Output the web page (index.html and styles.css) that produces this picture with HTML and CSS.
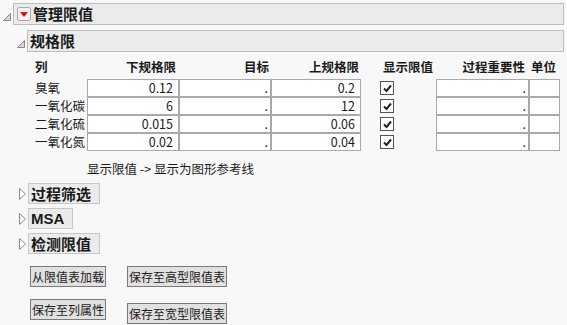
FILE: index.html
```html
<!DOCTYPE html>
<html lang="zh-CN">
<head>
<meta charset="UTF-8">
<title>管理限值</title>
<link rel="stylesheet" href="styles.css">
</head>
<body>
<div class="outline top">
    <div class="ohead">
        <svg class="tri" width="8" height="8" viewBox="0 0 8 8"><polygon points="0.5,7.5 7.5,0.5 7.5,7.5" fill="#d6d6d6" stroke="#8a8a8a" stroke-width="1"/></svg>
        <div class="bar main">
            <span class="menu"><svg width="8" height="5" viewBox="0 0 8 5"><polygon points="0,0 8,0 4,5" fill="#e0101a"/></svg></span>
            管理限值
        </div>
    </div>

    <div class="outline sub">
        <div class="ohead">
            <svg class="tri" width="8" height="8" viewBox="0 0 8 8"><polygon points="0.5,7.5 7.5,0.5 7.5,7.5" fill="#d6d6d6" stroke="#8a8a8a" stroke-width="1"/></svg>
            <div class="bar">规格限</div>
        </div>
        <div class="obody">
            <table class="limits">
                <tr class="hdr">
                    <th class="name">列</th>
                    <th class="num c-lsl">下规格限</th>
                    <th class="num c-tgt">目标</th>
                    <th class="num c-usl">上规格限</th>
                    <th class="show">显示限值</th>
                    <th class="num c-imp">过程重要性</th>
                    <th class="unit">单位</th>
                </tr>
                <tr>
                    <td class="name">臭氧</td>
                    <td class="cell num">0.12</td>
                    <td class="cell num">.</td>
                    <td class="cell num">0.2</td>
                    <td class="show"><span class="check"><svg width="11" height="11" viewBox="0 0 11 11"><path d="M2 5.5 L4.5 8 L9 2.5" fill="none" stroke="#222" stroke-width="2"/></svg></span></td>
                    <td class="cell num">.</td>
                    <td class="cell"></td>
                </tr>
                <tr>
                    <td class="name">一氧化碳</td>
                    <td class="cell num">6</td>
                    <td class="cell num">.</td>
                    <td class="cell num">12</td>
                    <td class="show"><span class="check"><svg width="11" height="11" viewBox="0 0 11 11"><path d="M2 5.5 L4.5 8 L9 2.5" fill="none" stroke="#222" stroke-width="2"/></svg></span></td>
                    <td class="cell num">.</td>
                    <td class="cell"></td>
                </tr>
                <tr>
                    <td class="name">二氧化硫</td>
                    <td class="cell num">0.015</td>
                    <td class="cell num">.</td>
                    <td class="cell num">0.06</td>
                    <td class="show"><span class="check"><svg width="11" height="11" viewBox="0 0 11 11"><path d="M2 5.5 L4.5 8 L9 2.5" fill="none" stroke="#222" stroke-width="2"/></svg></span></td>
                    <td class="cell num">.</td>
                    <td class="cell"></td>
                </tr>
                <tr>
                    <td class="name">一氧化氮</td>
                    <td class="cell num">0.02</td>
                    <td class="cell num">.</td>
                    <td class="cell num">0.04</td>
                    <td class="show"><span class="check"><svg width="11" height="11" viewBox="0 0 11 11"><path d="M2 5.5 L4.5 8 L9 2.5" fill="none" stroke="#222" stroke-width="2"/></svg></span></td>
                    <td class="cell num">.</td>
                    <td class="cell"></td>
                </tr>
            </table>
            <div class="note">显示限值 -&gt; 显示为图形参考线</div>
        </div>

        <div class="closed">
            <div class="ohead">
                <svg class="tri" width="7" height="12" viewBox="0 0 7 12"><polygon points="0.5,0.5 6.5,6 0.5,11.5" fill="#fff" stroke="#8a8a8a" stroke-width="1"/></svg>
                <div class="bar small">过程筛选</div>
            </div>
            <div class="ohead">
                <svg class="tri" width="7" height="12" viewBox="0 0 7 12"><polygon points="0.5,0.5 6.5,6 0.5,11.5" fill="#fff" stroke="#8a8a8a" stroke-width="1"/></svg>
                <div class="bar small latin">MSA</div>
            </div>
            <div class="ohead">
                <svg class="tri" width="7" height="12" viewBox="0 0 7 12"><polygon points="0.5,0.5 6.5,6 0.5,11.5" fill="#fff" stroke="#8a8a8a" stroke-width="1"/></svg>
                <div class="bar small">检测限值</div>
            </div>
        </div>

        <div class="actions">
            <button class="btn">从限值表加载</button>
            <button class="btn">保存至高型限值表</button>
            <button class="btn">保存至列属性</button>
            <button class="btn low">保存至宽型限值表</button>
        </div>
    </div>
</div>
</body>
</html>
```

FILE: styles.css
```css
body {
    margin: 0;
    background: #f8f8f8;
    font-family: "Noto Sans CJK SC", "Noto Sans", sans-serif;
    font-size: 12.5px;
    color: #1a1a1a;
    width: 567px;
    height: 325px;
    overflow: hidden;
}

.top {
    padding-top: 3px;
}
.ohead {
    display: flex;
    align-items: center;
}
.top > .ohead {
    padding-left: 3px;
    margin-right: 3px;
}
.tri {
    flex: none;
    margin-right: 2px;
}
.top > .ohead .tri {
    margin-top: 6px;
}
.bar {
    display: flex;
    align-items: center;
    height: 20px;
    flex: 1;
    background: #ebebeb;
    border: 1px solid #bdbdbd;
    font-size: 15px;
    font-weight: bold;
    line-height: 20px;
    padding-left: 2px;
}
.bar.main {
    padding-left: 3px;
}
.menu {
    display: flex;
    align-items: center;
    justify-content: center;
    width: 12px;
    height: 12px;
    border: 1px solid #a8a8a8;
    border-radius: 2px;
    background: #f2f2f2;
    margin-right: 2px;
}

.sub {
    margin-top: 5px;
}
.sub > .ohead {
    padding-left: 17px;
    margin-right: 3px;
}
.sub > .ohead .tri {
    margin-top: 6px;
}

.obody {
    padding-left: 35px;
    padding-top: 6px;
}

.limits {
    border-collapse: separate;
    border-spacing: 0;
}
.limits th {
    font-weight: bold;
    height: 21px;
    padding: 0;
    vertical-align: top;
    line-height: 17px;
}
.limits td {
    height: 16px;
    padding: 0;
    line-height: 16px;
}
.limits .name {
    width: 52px;
    text-align: left;
}
.limits .cell {
    background: #fff;
    border: 1px solid #a9a9a9;
}
.limits .num {
    text-align: right;
    padding-right: 5px;
}
.limits th.num {
    padding-right: 3px;
}
.limits tr > :nth-child(2) { width: 85px; }
.limits tr > :nth-child(3) { width: 84px; }
.limits tr > :nth-child(4) { width: 83px; }
.limits tr > :nth-child(5) { width: 75px; }
.limits tr > :nth-child(6) { width: 85px; }
.limits tr > :nth-child(7) { width: 29px; }
.limits td:nth-child(3),
.limits td:nth-child(6) {
    padding-right: 2px;
    width: 88px;
}
.limits td:nth-child(6) {
    width: 89px;
}
.limits th:nth-child(3),
.limits th:nth-child(4) {
    padding-right: 2px;
}
.limits th:nth-child(6) {
    padding-right: 4px;
}
.limits .show {
    text-align: left;
    padding-left: 19px;
}
.limits th.show {
    padding-left: 22px;
    width: 53px;
}
.limits td.show {
    width: 56px;
}
.limits th.unit {
    text-align: left;
    padding-left: 2px;
}
.check {
    display: flex;
    align-items: center;
    justify-content: center;
    width: 12px;
    height: 12px;
    border: 1px solid #555;
    background: #fff;
}

.note {
    margin-top: 10px;
    padding-left: 52px;
    line-height: 16px;
}

.closed {
    display: flex;
    flex-direction: column;
    align-items: flex-start;
    gap: 4px;
    margin-top: 6px;
}
.closed .ohead {
    padding-left: 19px;
}
.bar.small {
    flex: none;
    height: 19px;
    padding-right: 8px;
    border-color: #c6c6c6;
}
.latin {
    font-family: "Liberation Sans", "Noto Sans", sans-serif;
}

.actions {
    display: grid;
    grid-template-columns: 76px 100px;
    column-gap: 21px;
    row-gap: 12px;
    align-items: start;
    padding-left: 30px;
    margin-top: 12px;
}
.btn {
    height: 21px;
    padding: 0;
    font-family: "Noto Sans CJK SC", "Noto Sans", sans-serif;
    font-size: 12px;
    color: #1a1a1a;
    background: #e1e1e1;
    border: 1px solid #7a7a7a;
    border-radius: 0;
    line-height: 19px;
}
.btn.low {
    margin-top: 4px;
}
```
